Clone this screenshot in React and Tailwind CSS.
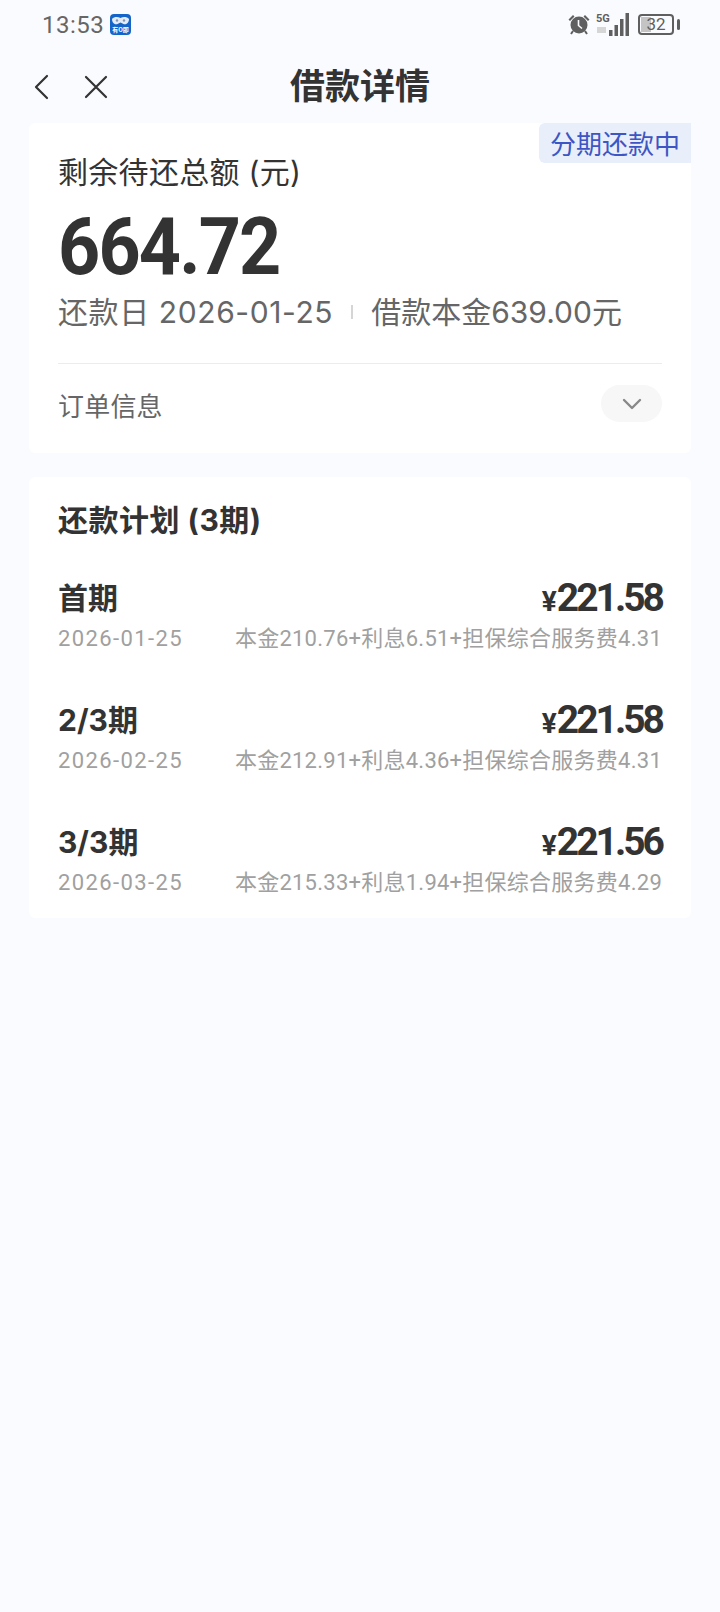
import React from 'react';

const plans = [
  { name: '首期', date: '2026-01-25', amount: '221.58', detail: '本金210.76+利息6.51+担保综合服务费4.31' },
  { name: '2/3期', date: '2026-02-25', amount: '221.58', detail: '本金212.91+利息4.36+担保综合服务费4.31' },
  { name: '3/3期', date: '2026-03-25', amount: '221.56', detail: '本金215.33+利息1.94+担保综合服务费4.29' },
];

function AppBadge() {
  return (
    <svg width="21" height="21" viewBox="0 0 21 21">
      <rect width="21" height="21" rx="4" fill="#1565c8" />
      <path d="M2 5C4 2.500 8 2.500 10.500 4C13 2.500 17 2.500 19 5C19 9.500 15.500 11 13.500 10L10.500 8.500L7.500 10C5.500 11 2 9.500 2 5Z" fill="#e4ebf5" />
      <circle cx="7" cy="6.500" r="1.200" fill="#7f96b8" />
      <circle cx="14" cy="6.500" r="1.200" fill="#7f96b8" />
      <text x="10.500" y="17.800" fontSize="6" fontWeight="700" fill="#fff" textAnchor="middle" fontFamily="Noto Sans CJK SC">有O即</text>
    </svg>
  );
}

function StatusIcons() {
  return (
    <div className="flex items-center text-[#5f5f5f]">
      {/* alarm */}
      <svg width="22" height="22" viewBox="0 0 22 22" fill="#5f5f5f">
        <circle cx="11" cy="12" r="8.500" />
        <path d="M0.500 6.500L5 2L6.500 3.500L2 8ZM21.500 6.500L17 2L15.500 3.500L20 8Z" />
        <path d="M5 18L3 21M17 18L19 21" stroke="#5f5f5f" strokeWidth="2" />
        <path d="M10.500 7V12.500L14 15.500" stroke="#fafbff" strokeWidth="1.600" fill="none" />
      </svg>
      {/* 5G signal */}
      <svg width="37" height="25" viewBox="3 0 37 25" className="ml-[6px]" fill="#5f5f5f">
        <text x="3" y="10" fontSize="11" fontWeight="700" fontFamily="Roboto">5G</text>
        <rect x="4" y="15" width="9" height="6" fill="#d6d6d6" />
        <rect x="16" y="18" width="3.500" height="6" />
        <rect x="21.500" y="13" width="3.500" height="11" />
        <rect x="27" y="7" width="3.500" height="17" />
        <rect x="32.500" y="1" width="3.500" height="23" />
      </svg>
      {/* battery */}
      <div className="relative ml-[5px] flex h-[21px] w-[36px] items-center justify-center rounded-[4px] border-2 border-[#5f5f5f] font-['Roboto'] text-[17px] leading-none">
        <div className="absolute left-[1px] top-[1px] bottom-[1px] w-[10px] bg-[#c4c4c4]" />
        <span className="relative">32</span>
      </div>
      <div className="ml-[3px] h-[11px] w-[3px] rounded-sm bg-[#5f5f5f]" />
    </div>
  );
}

export default function App() {
  return (
    <div className="min-h-[1612px] bg-[#fafbff] font-['Inter','Noto_Sans_CJK_SC',sans-serif] text-[#333]">
      {/* Status bar */}
      <div className="flex h-[48px] items-center justify-between pl-[42px] pr-[40px]">
        <div className="flex items-center gap-[6px] pt-[1px]">
          <span className="font-['Roboto'] text-[24px] tracking-[0.5px] text-[#666]">13:53</span>
          <AppBadge />
        </div>
        <StatusIcons />
      </div>

      {/* Nav */}
      <div className="relative flex h-[75px] items-center justify-center pt-[1px]">
        <div className="absolute left-[33px] top-[26px] flex items-center gap-[33px]">
          <svg width="18" height="26" viewBox="0 0 18 26" fill="none" stroke="#333" strokeWidth="2.200" strokeLinecap="round" strokeLinejoin="round">
            <path d="M14 2L3 13L14 24" />
          </svg>
          <svg width="24" height="24" viewBox="0 0 24 24" fill="none" stroke="#333" strokeWidth="2.200" strokeLinecap="round">
            <path d="M2 2L22 22M22 2L2 22" />
          </svg>
        </div>
        <h1 className="text-[35px] font-bold">借款详情</h1>
      </div>

      <div className="px-[29px]">
        {/* Summary card */}
        <section className="relative h-[330px] rounded-[6px] bg-white px-[29px]">
          <div className="absolute right-0 top-0 flex h-[40px] w-[152px] items-center justify-center rounded-bl-[6px] rounded-tl-[6px] bg-[#e9eefb] pt-[3px] text-[26px] text-[#3d56c4]">
            分期还款中
          </div>
          <p className="pt-[28px] text-[30px] leading-[42px] tracking-[0.3px]">剩余待还总额 (元)</p>
          <p className="mt-[11px] origin-left scale-x-[0.92] font-['Roboto'] text-[80px] font-bold leading-[86px] tracking-[-2px]">664.72</p>
          <div className="mt-[1px] flex items-center text-[30px] leading-[42px] text-[#666]">
            <span className="tracking-[0.6px]">还款日 2026-01-25</span>
            <span className="ml-[18px] h-[14px] w-[2px] bg-[#d5d5d5]" />
            <span className="ml-[18px]">借款本金639.00元</span>
          </div>
          <div className="mt-[30px] h-px bg-[#ececec]" />
          <div className="flex h-[85px] items-center justify-between">
            <span className="text-[26px] tracking-[0.2px] text-[#666]">订单信息</span>
            <div className="mb-[6px] flex h-[37px] w-[61px] items-center justify-center rounded-full bg-[#f7f7f7]">
              <svg width="20" height="12" viewBox="0 0 20 12" fill="none" stroke="#888" strokeWidth="2.400" strokeLinecap="round" strokeLinejoin="round">
                <path d="M2 2L10 10L18 2" />
              </svg>
            </div>
          </div>
        </section>

        {/* Plan card */}
        <section className="mt-[24px] h-[441px] rounded-[6px] bg-white px-[29px] pt-[22px]">
          <h2 className="text-[30px] font-bold leading-[42px] tracking-[0.5px]">还款计划 (3期)</h2>
          <div className="mt-[33px] flex flex-col gap-[38px]">
            {plans.map((plan) => (
              <div key={plan.date}>
                <div className="flex h-[44px] items-center justify-between">
                  <span className="pt-[4px] text-[30px] font-bold leading-[44px]">{plan.name}</span>
                  <span className="pt-[8px] font-['Roboto'] text-[39px] font-bold leading-[44px] tracking-[-3px]">
                    <span className="mr-[3px] text-[28px]">¥</span>{plan.amount}
                  </span>
                </div>
                <div className="flex h-[40px] items-center justify-between pt-[2px] font-['Roboto','Noto_Sans_CJK_SC',sans-serif] text-[22px] leading-[40px] text-[#a0a0a0]">
                  <span className="tracking-[1.4px]">{plan.date}</span>
                  <span className="tracking-[0.25px]">{plan.detail}</span>
                </div>
              </div>
            ))}
          </div>
        </section>
      </div>
    </div>
  );
}
